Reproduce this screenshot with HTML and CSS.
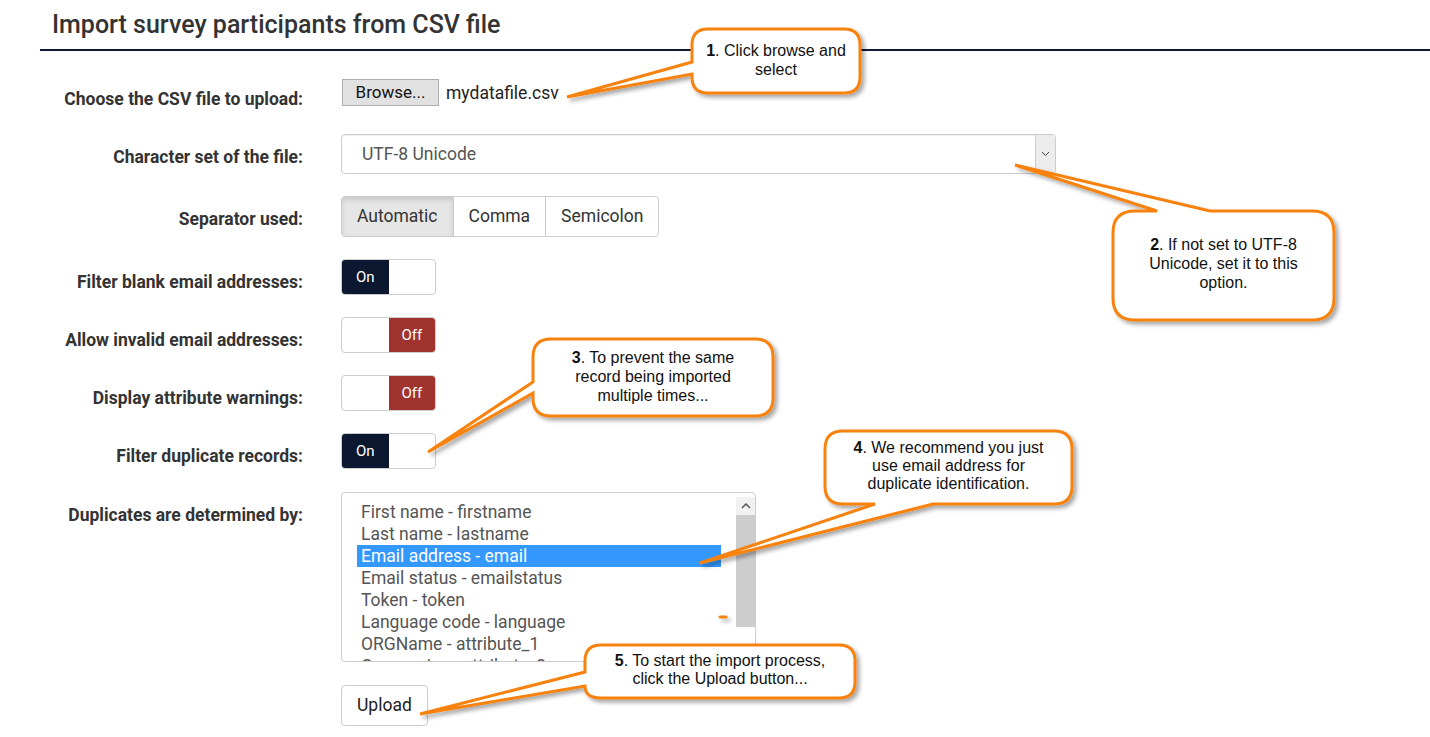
FILE: index.html
```html
<!DOCTYPE html>
<html lang="en">
<head>
    <meta charset="UTF-8">
    <meta name="viewport" content="width=device-width, initial-scale=1.0">
    <title>Import survey participants from CSV file</title>
    <link rel="stylesheet" href="styles.css">
</head>
<body>
    <div class="page">
        <h1 class="title">Import survey participants from CSV file</h1>

        <div class="form">
            <div class="row row-file">
                <label class="label">Choose the CSV file to upload:</label>
                <div class="control">
                    <span class="browse">Browse...</span>
                    <span class="filename">mydatafile.csv</span>
                </div>
            </div>

            <div class="row">
                <label class="label">Character set of the file:</label>
                <div class="control">
                    <div class="select">
                        <span class="select-value">UTF-8 Unicode</span>
                        <span class="select-arrow">
                            <svg width="9" height="6" viewBox="0 0 9 6"><path d="M1 1l3.5 3.5L8 1" fill="none" stroke="#444" stroke-width="1"/></svg>
                        </span>
                    </div>
                </div>
            </div>

            <div class="row">
                <label class="label">Separator used:</label>
                <div class="control">
                    <div class="btn-group">
                        <span class="seg active">Automatic</span>
                        <span class="seg">Comma</span>
                        <span class="seg">Semicolon</span>
                    </div>
                </div>
            </div>

            <div class="row row-switch">
                <label class="label">Filter blank email addresses:</label>
                <div class="control">
                    <div class="toggle"><span class="on">On</span><span class="blank"></span></div>
                </div>
            </div>

            <div class="row row-switch">
                <label class="label">Allow invalid email addresses:</label>
                <div class="control">
                    <div class="toggle"><span class="blank"></span><span class="off">Off</span></div>
                </div>
            </div>

            <div class="row row-switch">
                <label class="label">Display attribute warnings:</label>
                <div class="control">
                    <div class="toggle"><span class="blank"></span><span class="off">Off</span></div>
                </div>
            </div>

            <div class="row row-switch">
                <label class="label">Filter duplicate records:</label>
                <div class="control">
                    <div class="toggle"><span class="on">On</span><span class="blank"></span></div>
                </div>
            </div>

            <div class="row row-top">
                <label class="label">Duplicates are determined by:</label>
                <div class="control">
                    <div class="listbox">
                        <ul class="options">
                            <li>First name - firstname</li>
                            <li>Last name - lastname</li>
                            <li class="selected">Email address - email</li>
                            <li>Email status - emailstatus</li>
                            <li>Token - token</li>
                            <li>Language code - language</li>
                            <li>ORGName - attribute_1</li>
                            <li>Companies - attribute_2</li>
                        </ul>
                        <div class="scrollbar">
                            <span class="scroll-up">
                                <svg width="10" height="6" viewBox="0 0 10 6"><path d="M1 5l4-4 4 4" fill="none" stroke="#555" stroke-width="1.5"/></svg>
                            </span>
                            <span class="thumb"></span>
                        </div>
                    </div>
                </div>
            </div>

            <div class="row row-submit">
                <span class="label"></span>
                <div class="control">
                    <span class="upload">Upload</span>
                </div>
            </div>
        </div>
    </div>

    <!-- annotation callouts drawn over the form -->
    <svg class="callouts" width="1430" height="737" viewBox="0 0 1430 737">
        <defs>
            <filter id="shade" x="-10%" y="-10%" width="130%" height="140%">
                <feDropShadow dx="3" dy="3" stdDeviation="2" flood-color="#000" flood-opacity="0.35"/>
            </filter>
        </defs>
        <g fill="#fff" stroke="#f7820f" stroke-width="3" filter="url(#shade)">
            <path d="M708 29 H844 Q860 29 860 45 V77 Q860 93 844 93 H708 Q692 93 692 77 V74 L567 97 L692 62 V45 Q692 29 708 29 Z"/>
            <path d="M1135 211 H1157 L1015 165 L1210 211 H1312 Q1334 211 1334 233 V298 Q1334 320 1312 320 H1135 Q1113 320 1113 298 V233 Q1113 211 1135 211 Z"/>
            <path d="M551 339 H755 Q773 339 773 357 V398 Q773 416 755 416 H551 Q533 416 533 398 V393 L428 452 L533 382 V357 Q533 339 551 339 Z"/>
            <path d="M843 431 H1054 Q1072 431 1072 449 V486 Q1072 504 1054 504 H933 L700 563 L875 504 H843 Q825 504 825 486 V449 Q825 431 843 431 Z"/>
            <path d="M601 645 H839 Q855 645 855 661 V682 Q855 698 839 698 H601 Q585 698 585 686 L420 714 L585 672 V661 Q585 645 601 645 Z"/>
            <path d="M720 617 H726" stroke-width="3" stroke-linecap="round"/>
        </g>
    </svg>

    <div class="note note-1"><b>1</b>. Click browse and<br>select</div>
    <div class="note note-2"><b>2</b>. If not set to UTF-8<br>Unicode, set it to this<br>option.</div>
    <div class="note note-3"><b>3</b>. To prevent the same<br>record being imported<br>multiple times...</div>
    <div class="note note-4"><b>4</b>. We recommend you just<br>use email address for<br>duplicate identification.</div>
    <div class="note note-5"><b>5</b>. To start the import process,<br>click the Upload button...</div>
</body>
</html>
```

FILE: styles.css
```css
body {
    margin: 0;
    font-family: Roboto, "Noto Sans", sans-serif;
    color: #333;
    background: #fff;
}
.page {
    margin-left: 40px;
    width: 1390px;
}
.title {
    margin: 0;
    padding: 9px 0 0 12px;
    height: 40px;
    font-size: 25px;
    font-weight: 500;
    line-height: 32px;
    color: #333;
    border-bottom: 2px solid #111a33;
}
.form {
    display: flex;
    flex-direction: column;
    gap: 22px;
    padding-top: 25px;
}
.row {
    display: flex;
    align-items: center;
}
.row-file {
    height: 33px;
    margin-bottom: 3px;
}
.row-file .label {
    padding-top: 12px;
}
.row-switch .label {
    padding-top: 9px;
}
.row-top {
    align-items: flex-start;
    margin-top: 1px;
}
.row-submit {
    margin-top: 1px;
}
.label {
    width: 263px;
    padding-top: 5px;
    text-align: right;
    font-size: 17.5px;
    font-weight: 700;
    color: #333;
}
.row-top .label {
    padding-top: 13px;
}
.control {
    margin-left: 38px;
    display: flex;
    align-items: center;
}
.browse {
    display: inline-block;
    width: 95px;
    height: 25px;
    line-height: 25px;
    margin-left: 1px;
    text-align: center;
    background: #e1e1e1;
    border: 1px solid #adadad;
    font-size: 17px;
    color: #111;
}
.filename {
    margin-left: 7px;
    font-size: 17.5px;
    color: #222;
}
.select {
    width: 713px;
    height: 38px;
    border: 1px solid #ccc;
    border-radius: 4px;
    display: flex;
    align-items: center;
    justify-content: space-between;
    box-shadow: inset 0 1px 1px rgba(0, 0, 0, 0.06);
}
.select-value {
    padding-left: 20px;
    font-size: 17.5px;
    color: #555;
}
.select-arrow {
    width: 19px;
    height: 38px;
    display: flex;
    align-items: center;
    justify-content: center;
    background: #ececec;
    border-left: 1px solid #ccc;
    border-radius: 0 3px 3px 0;
}
.btn-group {
    display: flex;
    border: 1px solid #ccc;
    border-radius: 4px;
    overflow: hidden;
}
.seg {
    height: 39px;
    line-height: 39px;
    padding: 0 15px;
    font-size: 17.5px;
    color: #333;
    border-left: 1px solid #ccc;
}
.seg:first-child {
    border-left: none;
}
.seg.active {
    background: #e6e6e6;
    box-shadow: inset 0 3px 5px rgba(0, 0, 0, 0.125);
}
.toggle {
    display: flex;
    width: 93px;
    height: 34px;
    border: 1px solid #ccc;
    border-radius: 4px;
    overflow: hidden;
}
.toggle span {
    flex: 1;
    display: flex;
    align-items: center;
    justify-content: center;
    font-size: 15px;
    color: #fff;
}
.toggle .on {
    background: #0b1830;
}
.toggle .off {
    background: #a0332f;
}
.listbox {
    display: flex;
    width: 413px;
    height: 168px;
    border: 1px solid #ccc;
    border-radius: 4px;
    overflow: hidden;
}
.options {
    flex: 1;
    list-style: none;
    margin: 0;
    padding: 8px 15px 0 15px;
}
.options li {
    height: 22px;
    line-height: 22px;
    padding-left: 4px;
    font-size: 17.5px;
    color: #555;
    white-space: nowrap;
}
.options li.selected {
    background: #3399ff;
    color: #fff;
}
.scrollbar {
    width: 19px;
    display: flex;
    flex-direction: column;
    background: #fff;
    margin-top: 4px;
}
.scroll-up {
    height: 18px;
    display: flex;
    align-items: center;
    justify-content: center;
    background: #f1f1f1;
}
.thumb {
    height: 112px;
    background: #cdcdcd;
}
.upload {
    display: inline-block;
    height: 39px;
    line-height: 39px;
    padding: 0 15px;
    border: 1px solid #ccc;
    border-radius: 4px;
    font-size: 17.5px;
    color: #222;
}
.callouts {
    position: absolute;
    left: 0;
    top: 0;
    pointer-events: none;
}
.note {
    position: absolute;
    font-family: "Liberation Sans", Arial, sans-serif;
    font-size: 16px;
    line-height: 19px;
    color: #111;
    text-align: center;
}
.note-1 { left: 692px; top: 41px; width: 168px; }
.note-2 { left: 1113px; top: 235px; width: 221px; }
.note-3 { left: 533px; top: 348px; width: 240px; }
.note-4 { left: 825px; top: 439px; width: 247px; line-height: 18px; }
.note-5 { left: 585px; top: 652px; width: 270px; line-height: 18px; }
```
